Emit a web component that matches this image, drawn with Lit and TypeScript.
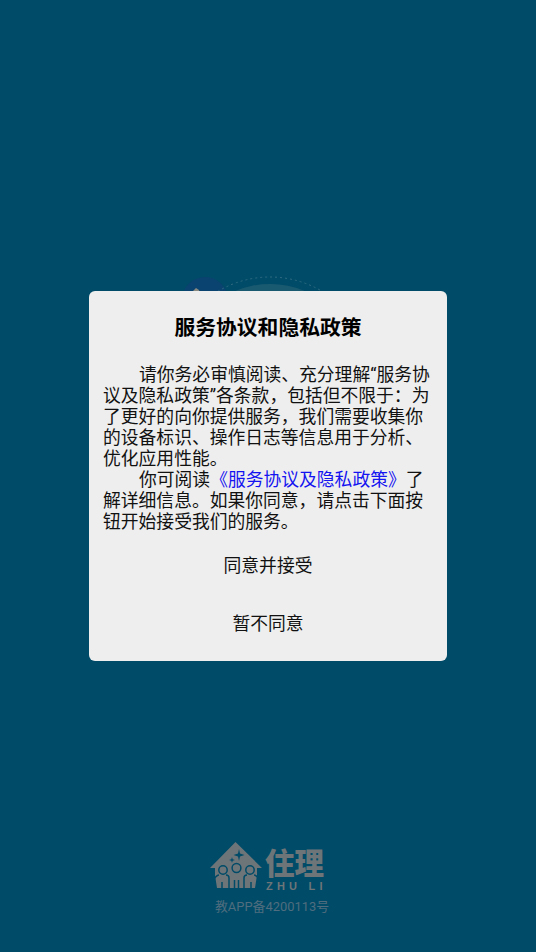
import { LitElement, html, css } from "lit";
import { customElement } from "lit/decorators.js";

@customElement("app-root")
export class AppRoot extends LitElement {
  static styles = css`
    :host {
      display: block;
      font-family: "Roboto", "Noto Sans CJK SC", sans-serif;
    }
    .screen {
      position: relative;
      width: 536px;
      height: 952px;
      background: #004b68;
      overflow: hidden;
      display: flex;
      flex-direction: column;
      align-items: center;
    }
    .peek {
      position: absolute;
      left: 180px;
      top: 270px;
    }
    .footer {
      margin-top: auto;
      padding-bottom: 37px;
      display: flex;
      flex-direction: column;
      align-items: center;
      color: #6e7579;
    }
    .brand {
      display: flex;
      align-items: flex-start;
      gap: 3px;
      margin-right: 2px;
    }
    .words {
      display: flex;
      flex-direction: column;
      align-items: flex-start;
      width: 59px;
    }
    .zh {
      font-family: "Noto Sans CJK SC", sans-serif;
      font-size: 29.5px;
      line-height: 38px;
      font-weight: 900;
      white-space: nowrap;
    }
    .en {
      font-family: "Liberation Sans", sans-serif;
      font-size: 11px;
      line-height: 12px;
      margin-left: 1px;
      font-weight: 700;
      letter-spacing: 4.2px;
      white-space: pre;
    }
    .icp {
      margin-top: 7px;
      margin-left: 8px;
      font-size: 12.9px;
      line-height: 16px;
      color: #4f6d7e;
    }
    .dialog {
      position: absolute;
      left: 89px;
      top: 291px;
      width: 358px;
      height: 370px;
      box-sizing: border-box;
      background: #eeeeee;
      border-radius: 6px;
      padding: 24px 14px 0;
      display: flex;
      flex-direction: column;
      color: #111;
    }
    .title {
      text-align: center;
      font-size: 20.8px;
      line-height: 26px;
      font-weight: 700;
      color: #000;
    }
    .body {
      margin-top: 23px;
      font-size: 17.8px;
      line-height: 21px;
    }
    .body p {
      margin: 0;
      text-indent: 36px;
    }
    .body a {
      color: #1414f0;
      text-decoration: none;
    }
    .actions {
      margin-top: 5px;
      display: flex;
      flex-direction: column;
      align-items: center;
      font-size: 17.8px;
    }
    .actions div {
      height: 58px;
      line-height: 58px;
    }
  `;

  render() {
    return html`
      <div class="screen">
        <svg class="peek" width="160" height="24" viewBox="0 0 160 24">
          <circle cx="25" cy="30" r="23" fill="#0a4270" />
          <circle cx="90" cy="105" r="91" fill="#1a5a70" />
          <circle cx="90" cy="109" r="102" fill="none" stroke="#2f6b82" stroke-width="1" stroke-dasharray="2 3" />
          <path d="M13 21 l3 -3 l3 2 l1 3 h-7 Z" fill="#8a8a80" />
        </svg>
        <div class="footer">
          <div class="brand">
            <svg width="52" height="47" viewBox="0 0 52 47">
              <path fill="#6e7579" d="M25.5 0 L52 26 H47 V33 L45 46 H7 L5 33 V26 H0 Z" />
              <path fill="#004b68" d="M29 7 L30 11.5 L34.5 13 L30 14.5 L29 19 L28 14.5 L23.5 13 L28 11.5 Z" />
              <path fill="#004b68" d="M22 15 L22.7 17.3 L25 18 L22.7 18.7 L22 21 L21.3 18.7 L19 18 L21.3 17.3 Z" />
              <g fill="none" stroke="#004b68" stroke-width="1.5">
                <circle cx="13" cy="28" r="4.2" />
                <circle cx="40" cy="28" r="4.2" />
                <circle cx="26.5" cy="26" r="4.4" />
                <path d="M4 37 Q7 33 9 33 M49 37 Q46 33 44 33 M19 46 V36 Q19 33 16 33 M34 46 V36 Q34 33 37 33" />
                <path d="M12 46 V40 M41 46 V40 M24.5 46 V38 M28.5 46 V38" />
              </g>
            </svg>
            <div class="words">
              <div class="zh">住理</div>
              <div class="en">ZHU LI</div>
            </div>
          </div>
          <div class="icp">教APP备4200113号</div>
        </div>
        <div class="dialog">
          <div class="title">服务协议和隐私政策</div>
          <div class="body">
            <p>请你务必审慎阅读、充分理解“服务协议及隐私政策”各条款，包括但不限于：为了更好的向你提供服务，我们需要收集你的设备标识、操作日志等信息用于分析、优化应用性能。</p>
            <p>你可阅读<a>《服务协议及隐私政策》</a>了解详细信息。如果你同意，请点击下面按钮开始接受我们的服务。</p>
          </div>
          <div class="actions">
            <div>同意并接受</div>
            <div>暂不同意</div>
          </div>
        </div>
      </div>
    `;
  }
}
